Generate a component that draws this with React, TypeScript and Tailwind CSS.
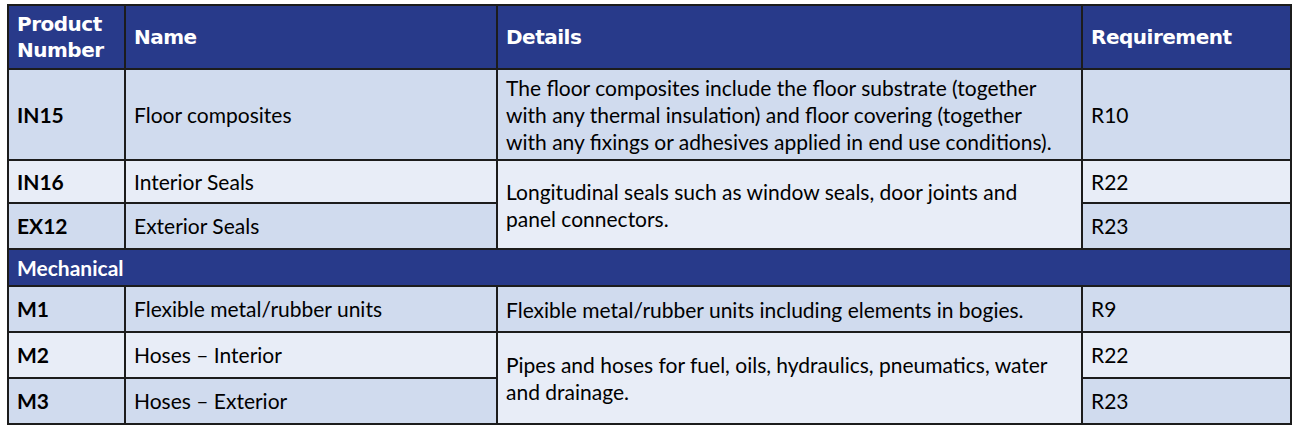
type Row = {
  code: string;
  name: string;
  req: string;
  shade: "dark" | "light";
  height: string;
  details?: { lines: string[]; rowSpan: number; shade: "dark" | "light" };
};

const shadeBg = {
  dark: "bg-[#d0dbee]",
  light: "bg-[#e8edf7]",
};

const seals: Row[] = [
  {
    code: "IN15",
    name: "Floor composites",
    req: "R10",
    shade: "dark",
    height: "h-[91px]",
    details: {
      lines: [
        "The floor composites include the floor substrate (together",
        "with any thermal insulation) and floor covering (together",
        "with any fixings or adhesives applied in end use conditions).",
      ],
      rowSpan: 1,
      shade: "dark",
    },
  },
  {
    code: "IN16",
    name: "Interior Seals",
    req: "R22",
    shade: "light",
    height: "h-[43px]",
    details: {
      lines: [
        "Longitudinal seals such as window seals, door joints and",
        "panel connectors.",
      ],
      rowSpan: 2,
      shade: "light",
    },
  },
  { code: "EX12", name: "Exterior Seals", req: "R23", shade: "dark", height: "h-[46px]" },
];

const mechanical: Row[] = [
  {
    code: "M1",
    name: "Flexible metal/rubber units",
    req: "R9",
    shade: "dark",
    height: "h-[46px]",
    details: {
      lines: ["Flexible metal/rubber units including elements in bogies."],
      rowSpan: 1,
      shade: "dark",
    },
  },
  {
    code: "M2",
    name: "Hoses \u2013 Interior",
    req: "R22",
    shade: "light",
    height: "h-[46px]",
    details: {
      lines: [
        "Pipes and hoses for fuel, oils, hydraulics, pneumatics, water",
        "and drainage.",
      ],
      rowSpan: 2,
      shade: "light",
    },
  },
  { code: "M3", name: "Hoses \u2013 Exterior", req: "R23", shade: "dark", height: "h-[46px]" },
];

const cell = "border-2 border-[#1c1c1c] px-[8px] align-middle";

function BodyRow({ row }: { row: Row }) {
  const bg = shadeBg[row.shade];
  return (
    <tr className={row.height}>
      <td className={`${cell} ${bg} font-bold`}>{row.code}</td>
      <td className={`${cell} ${bg}`}>{row.name}</td>
      {row.details && (
        <td
          rowSpan={row.details.rowSpan}
          className={`${cell} ${shadeBg[row.details.shade]} leading-[27px] whitespace-nowrap`}
        >
          {row.details.lines.map((line, i) => (
            <div key={i}>{line}</div>
          ))}
        </td>
      )}
      <td className={`${cell} ${bg}`}>{row.req}</td>
    </tr>
  );
}

export default function App() {
  return (
    <div className="w-[1297px] h-[433px] bg-white pl-[7px] pt-[4px]">
      <table
        className="table-fixed border-collapse w-[1283px] text-[21px] leading-[24px] text-black"
        style={{ fontFamily: "Lato, 'Open Sans', sans-serif" }}
      >
        <colgroup>
          <col className="w-[117px]" />
          <col className="w-[372px]" />
          <col className="w-[585px]" />
          <col className="w-[209px]" />
        </colgroup>
        <thead>
          <tr
            className="h-[64px] bg-[#283a8a] text-white text-[20px] font-bold leading-[26px] text-left"
            style={{ fontFamily: "'DejaVu Sans', sans-serif" }}
          >
            <th className={`${cell} px-[7px] tracking-[-0.5px]`}>
              Product
              <br />
              Number
            </th>
            <th className={`${cell} px-[7px] tracking-[-0.5px]`}>Name</th>
            <th className={`${cell} px-[7px] tracking-[-0.5px]`}>Details</th>
            <th className={`${cell} px-[7px] tracking-[-0.5px]`}>Requirement</th>
          </tr>
        </thead>
        <tbody>
          {seals.map((r) => (
            <BodyRow key={r.code} row={r} />
          ))}
          <tr className="h-[37px] bg-[#283a8a]">
            <td colSpan={4} className={`${cell} text-white font-bold`}>
              Mechanical
            </td>
          </tr>
          {mechanical.map((r) => (
            <BodyRow key={r.code} row={r} />
          ))}
        </tbody>
      </table>
    </div>
  );
}
